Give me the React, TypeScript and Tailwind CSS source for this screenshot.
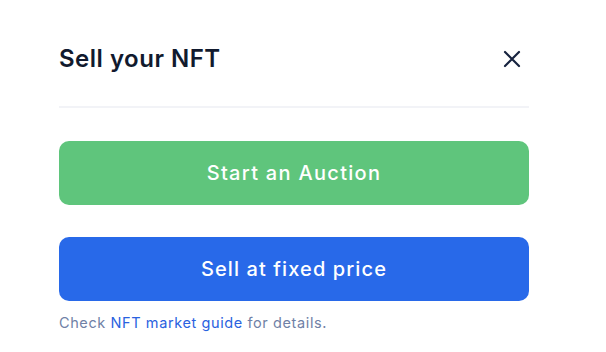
import React from 'react';

const CloseIcon = () => (
  <svg width="20" height="20" viewBox="0 0 20 20" fill="none" stroke="currentColor" strokeWidth="2.2" strokeLinecap="round">
    <path d="M3 3 L17 17 M17 3 L3 17" />
  </svg>
);

export default function App() {
  return (
    <div className="w-[606px] h-[352px] bg-white" style={{ fontFamily: 'Inter, "Noto Sans", sans-serif' }}>
      <div className="w-[470px] ml-[59px] pt-[42px]">
        <div className="flex items-center justify-between h-[34px]">
          <h2 className="text-[24px] font-semibold text-[#111a2e] tracking-[0.5px]">Sell your NFT</h2>
          <button className="text-[#17233f] mr-[7px]" aria-label="Close">
            <CloseIcon />
          </button>
        </div>
        <div className="mt-[30px] h-[2px] bg-[#f2f3f7]" />
        <div className="mt-[33px] flex flex-col gap-[32px]">
          <button className="h-[64px] rounded-[10px] bg-[#5fc57c] text-white text-[20px] font-medium tracking-[1.3px]">
            Start an Auction
          </button>
          <button className="h-[64px] rounded-[10px] bg-[#2869e9] text-white text-[20px] font-medium tracking-[1.1px]">
            Sell at fixed price
          </button>
        </div>
        <p className="mt-[11px] text-[14.5px] text-[#6f81a6] tracking-[0.6px]">
          Check <a className="text-[#2a62e0]">NFT market guide</a> for details.
        </p>
      </div>
    </div>
  );
}
